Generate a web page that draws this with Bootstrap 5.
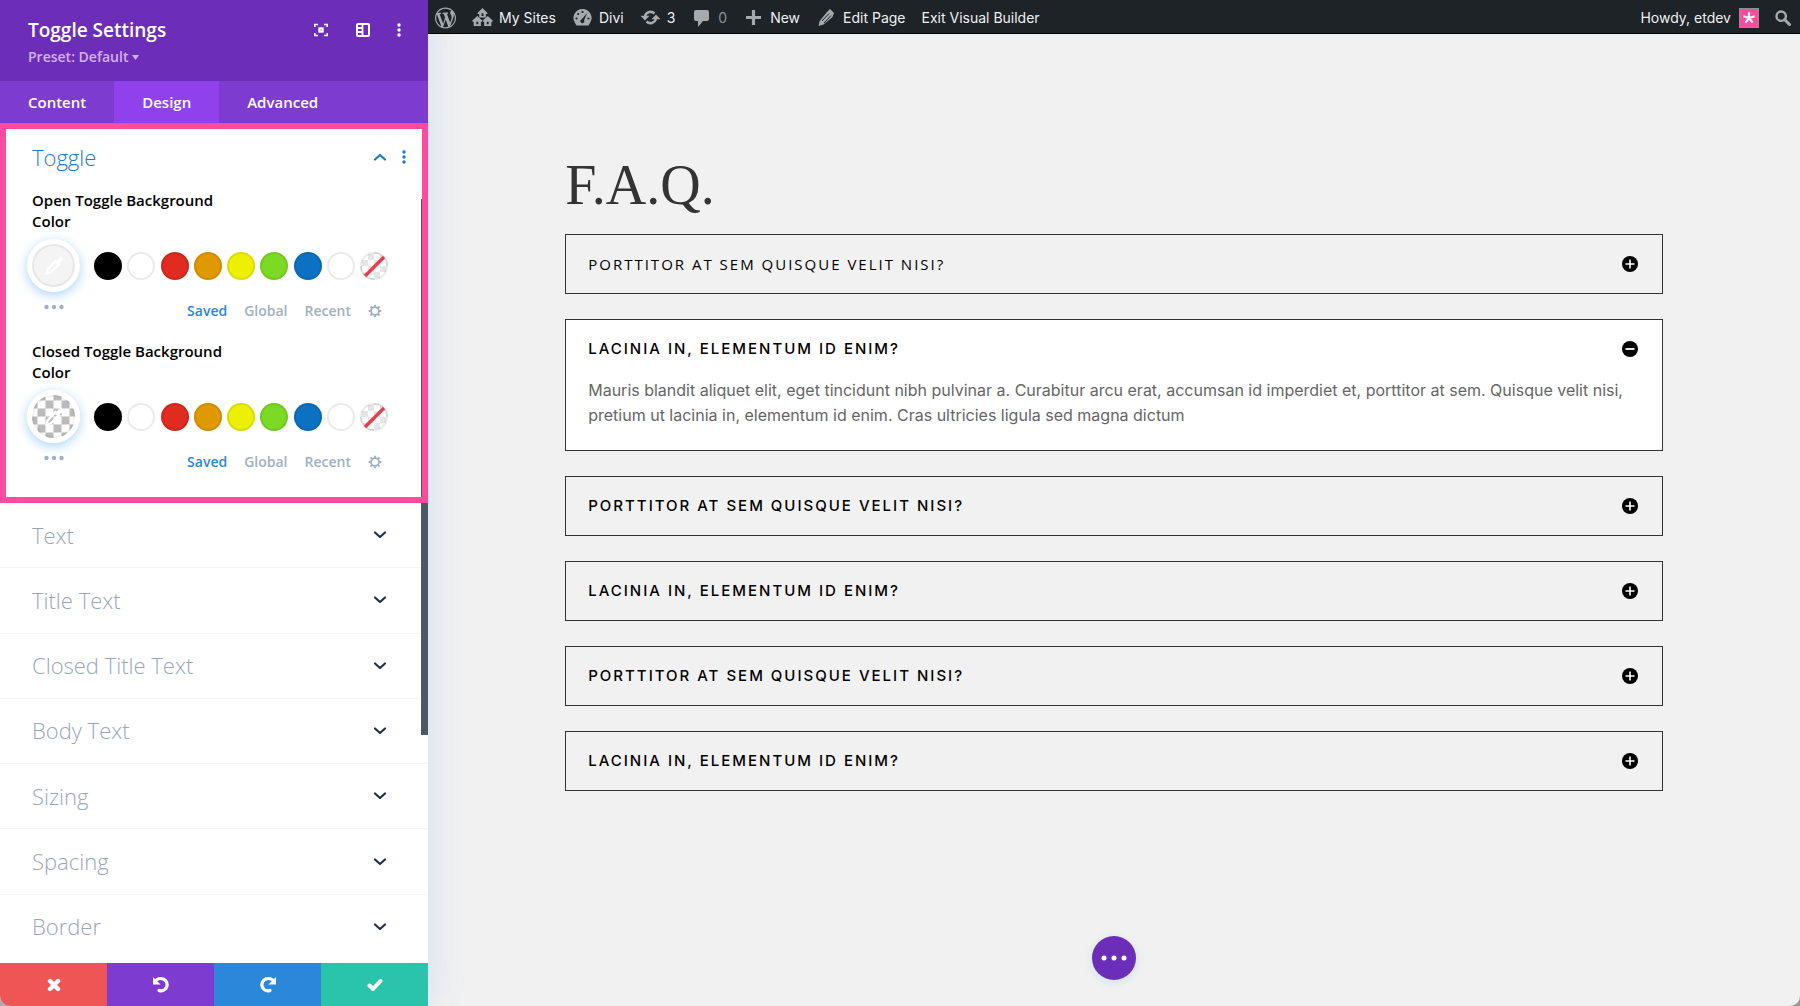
<!DOCTYPE html>
<html lang="en">
<head>
<meta charset="utf-8">
<meta name="viewport" content="width=device-width, initial-scale=1">
<title>Divi Visual Builder</title>
<link rel="stylesheet" href="https://cdn.jsdelivr.net/npm/bootstrap@5.3.0/dist/css/bootstrap.min.css">
<style>
  body { font-family: "Open Sans", sans-serif; background: #9a9a9a; color: #000; }
  button { font-family: inherit; font-weight: inherit; }
  a { text-decoration: none; color: inherit; }
  svg { display: block; flex: none; }
  .bare { border: 0; background: none; padding: 0; color: inherit; }

  /* settings panel */
  .panel { width: 428px; background: #fff; box-shadow: 0 0 40px #cfdeed; z-index: 2; border-bottom-left-radius: 10px; }
  .panel-top { background: #6c2eb9; color: #fff; padding: 16px 27px 12px 28px; }
  .panel-top h1 { font-size: 19px; line-height: 28px; font-weight: 600; }
  .panel-tools { height: 28px; gap: 27px; }
  .preset { font-size: 14px; line-height: 24px; font-weight: 600; color: #d5b0f7; gap: 4px; padding-top: 1px; }
  .tabs { background: #7e3bd0; color: #fff; font-size: 15px; font-weight: 600; line-height: 42px; }
  .tabs button { padding: 0 28px; }
  .tabs .active { background: #8f42ec; }
  .focus-frame { border: 6px solid #ff4a9e; height: 380px; padding: 12px 16px 0 26px; z-index: 1; }
  .group-title { font-size: 22px; line-height: 32px; font-weight: 300; }
  .group-head { margin-bottom: 17px; }
  .head-tools { gap: 15px; }
  .flip { transform: rotate(180deg); }
  .mirror { transform: scaleX(-1); }
  .blue { color: #2b87da; }
  .group-head.blue { color: #1a79d0; }
  .field-label { font-size: 15px; line-height: 21px; font-weight: 600; width: 200px; }
  .field { height: 151px; padding-right: 18px; }
  .picker { width: 53px; height: 53px; margin-left: -5px; border: 5px solid #fff; border-radius: 50%; background: #f4f4f4; color: #fff; box-shadow: 0 3px 12px #a9d4f3, inset 0 0 0 2px rgba(0,0,0,.05); }
  .checks { background: repeating-conic-gradient(#bbb 0 25%, #fff 0 50%) 50% / 16px 16px; }
  .picker-row { gap: 14px; margin-top: 7px; }
  .dot { width: 28px; height: 28px; border-radius: 50%; border: 2px solid rgba(0,0,0,.08); padding: 0; background-origin: border-box; }
  .c-black { background: #000; } .c-white { background: #fff; } .c-red { background: #e02b20; }
  .c-orange { background: #e09900; } .c-yellow { background: #edf000; } .c-green { background: #7cda24; }
  .c-blue { background: #0c71c3; }
  .c-none { background: repeating-conic-gradient(#e6e6e6 0 25%, #fff 0 50%) 50% / 12px 12px border-box; }
  .field-foot { padding: 0 6px 0 12px; margin-top: 7px; color: #a2b0c1; }
  .more-dots { padding-top: 5px; }
  .sources { font-size: 14px; line-height: 24px; font-weight: 600; gap: 17px; }
  .options { padding: 0 0 4px; }
  .option { color: #98a6b9; border-bottom: 1px solid #f3f5f8; padding: 0 41px 0 32px; font-size: 22px; font-weight: 300; }
  .option svg { color: #20304a; }
  .option:last-child { border-bottom: 0; }
  .thumb { right: 0; top: 199px; width: 7px; height: 536px; background: #4c5866; }
  .actions button { height: 43px; color: #fff; }
  .actions .a-discard { background: #ef5555; border-bottom-left-radius: 10px; }
  .actions .a-undo { background: #7e3bd0; }
  .actions .a-redo { background: #2b87da; }
  .actions .a-save { background: #29c4a9; }

  /* admin bar */
  .adminbar { height: 34px; background: #1d2327; border-bottom: 1px solid #000; color: #f0f0f1; font: 14px/31px Inter, sans-serif; padding: 2px 9px 0 7px; position: relative; z-index: 3; }
  .adminbar svg { color: #a7aaad; }
  .adminbar nav { gap: 16px; }
  .adminbar nav a { gap: 6px; }
  .adminbar nav svg { width: 21px; }
  .adminbar .muted-count { color: #8c9196; }
  .avatar { width: 20px; height: 20px; background: #ff4a9e; border: 1px solid #8c8f94; }
  .adminbar .avatar svg { color: #fff; }

  /* page */
  .site { background: #f1f1f1; border-bottom-right-radius: 10px; }
  .faq { width: 80%; padding-top: 116px; }
  .faq h2 { font: 400 56px/70px "Liberation Serif", serif; color: #333; margin: 0 0 14px; }
  .toggles { gap: 25px; }
  .toggle-box { border: 1px solid #333; padding: 17px 24px 17px 22px; }
  .toggle-box.open { background: #fff; padding-bottom: 22px; }
  .toggle-box h3 { font: 500 15px/24px Inter, sans-serif; letter-spacing: 2px; text-transform: uppercase; margin: 0; }
  .toggle-box h3.light { font: 400 15px/24px "Open Sans", sans-serif; letter-spacing: 2px; }
  .toggle-box p { font: 400 16px/25px Inter, sans-serif; color: #666; margin: 17px 0 0; }
  .fab { width: 44px; height: 44px; bottom: 26px; left: 50%; margin-left: -22px; border-radius: 50%; background: #6c2eb9; color: #fff; box-shadow: 0 2px 10px rgba(43,135,218,.15); }
</style>
</head>
<body>
<svg class="d-none">
  <symbol id="chev" viewBox="0 0 14 10"><path d="M2 2.500l5 4.500 5-4.500" fill="none" stroke="currentColor" stroke-width="2.200" stroke-linecap="round" stroke-linejoin="round"/></symbol>
  <symbol id="vdots" viewBox="0 0 4 14"><g fill="currentColor"><circle cx="2" cy="2" r="1.700"/><circle cx="2" cy="7" r="1.700"/><circle cx="2" cy="12" r="1.700"/></g></symbol>
  <symbol id="hdots" viewBox="0 0 20 6"><g fill="currentColor"><circle cx="2.500" cy="3" r="2.200"/><circle cx="10" cy="3" r="2.200"/><circle cx="17.500" cy="3" r="2.200"/></g></symbol>
  <symbol id="gear" viewBox="0 0 16 16"><g fill="none" stroke="currentColor"><circle cx="8" cy="8" r="4.500" stroke-width="2"/><path d="M8 .8v2.400M8 12.800v2.400M.8 8h2.400M12.800 8h2.400M2.900 2.900l1.700 1.700M11.400 11.400l1.700 1.700M2.900 13.100l1.700-1.700M11.400 4.600l1.700-1.700" stroke-width="2.200"/></g></symbol>
  <symbol id="dropper" viewBox="0 0 16 16"><path d="M2 14l1-3.500 6-6 2.500 2.500-6 6z" fill="none" stroke="currentColor" stroke-width="1.800"/><path d="M8 3.500l1-1 1.300 1 1.700-2.200a1.900 1.900 0 0 1 2.700 2.700L12.500 5.700l1 1.300-1 1z" fill="currentColor"/></symbol>
  <symbol id="slash" viewBox="0 0 24 24"><path d="M3 22L22 3" stroke="#f0384a" stroke-width="3.200"/></symbol>
  <symbol id="plus" viewBox="0 0 16 16"><circle cx="8" cy="8" r="8"/><path d="M8 3.500v9M3.500 8h9" stroke="#fff" stroke-width="1.600"/></symbol>
  <symbol id="minus" viewBox="0 0 16 16"><circle cx="8" cy="8" r="8"/><path d="M3.500 8h9" stroke="#fff" stroke-width="1.800"/></symbol>
  <symbol id="undo" viewBox="0 0 18 18"><path d="M3 5.500C5 2.600 8.500 1.900 11.300 3c3.300 1.400 4.700 5 3.300 8.200-1.400 3-4.600 4.300-7.600 3.200" fill="none" stroke="currentColor" stroke-width="3.200" stroke-linecap="round"/><path d="M1 1v7.500h7.500z" fill="currentColor"/></symbol>
</svg>

<div class="d-flex vh-100 overflow-hidden">
  <aside class="panel d-flex flex-column flex-shrink-0 position-relative">
    <header class="panel-top d-flex justify-content-between align-items-start">
      <div>
        <h1 class="m-0">Toggle Settings</h1>
        <button class="bare preset d-flex align-items-center" type="button">Preset: Default
          <svg width="7" height="5" viewBox="0 0 7 5"><path d="M0 0h7L3.500 5z" fill="currentColor"/></svg></button>
      </div>
      <div class="panel-tools d-flex align-items-center">
        <button class="bare" type="button" aria-label="Expand"><svg width="16" height="16" viewBox="0 0 16 16"><path d="M1.800 5V2.500H5M11 2.500h3.200V5M14.200 11v2.500H11M5 13.500H1.800V11" fill="none" stroke="currentColor" stroke-width="1.600"/><rect x="6.400" y="6.400" width="3.200" height="3.200" fill="none" stroke="currentColor" stroke-width="2.200"/></svg></button>
        <button class="bare" type="button" aria-label="Dock"><svg width="14" height="14" viewBox="0 0 14 14"><rect x="1" y="1" width="12" height="12" rx="1" fill="none" stroke="currentColor" stroke-width="2"/><path d="M6.500 1v12M1 5h5M1 9h5" stroke="currentColor" stroke-width="1.800"/></svg></button>
        <button class="bare" type="button" aria-label="More"><svg width="4" height="14"><use href="#vdots"/></svg></button>
      </div>
    </header>
    <nav class="tabs d-flex">
      <button class="bare" type="button">Content</button>
      <button class="bare active" type="button">Design</button>
      <button class="bare" type="button">Advanced</button>
    </nav>

    <section class="focus-frame position-relative">
      <div class="group-head d-flex align-items-center justify-content-between blue">
        <h2 class="group-title m-0">Toggle</h2>
        <div class="head-tools d-flex align-items-center">
          <button class="bare" type="button" aria-label="Collapse"><svg class="flip" width="14" height="10"><use href="#chev"/></svg></button>
          <button class="bare" type="button" aria-label="Toggle options"><svg width="4" height="14"><use href="#vdots"/></svg></button>
        </div>
      </div>
      <div class="field">
        <div class="field-label">Open Toggle Background Color</div>
        <div class="picker-row d-flex align-items-center">
          <button class="picker d-flex align-items-center justify-content-center p-0" type="button" aria-label="Pick open colour"><svg width="20" height="20"><use href="#dropper"/></svg></button>
          <div class="d-flex justify-content-between flex-fill">
            <button class="dot c-black" type="button" aria-label="Black"></button><button class="dot c-white" type="button" aria-label="White"></button><button class="dot c-red" type="button" aria-label="Red"></button><button class="dot c-orange" type="button" aria-label="Orange"></button><button class="dot c-yellow" type="button" aria-label="Yellow"></button><button class="dot c-green" type="button" aria-label="Green"></button><button class="dot c-blue" type="button" aria-label="Blue"></button><button class="dot c-white" type="button" aria-label="White"></button><button class="dot c-none" type="button" aria-label="None"><svg width="24" height="24"><use href="#slash"/></svg></button>
          </div>
        </div>
        <div class="field-foot d-flex justify-content-between">
          <button class="bare more-dots align-self-start" type="button" aria-label="More colours"><svg width="20" height="6"><use href="#hdots"/></svg></button>
          <div class="sources d-flex align-items-center">
            <button class="bare blue" type="button">Saved</button><button class="bare" type="button">Global</button><button class="bare" type="button">Recent</button><button class="bare" type="button" aria-label="Palette settings"><svg width="14" height="14"><use href="#gear"/></svg></button>
          </div>
        </div>
      </div>
      <div class="field">
        <div class="field-label">Closed Toggle Background Color</div>
        <div class="picker-row d-flex align-items-center">
          <button class="picker checks d-flex align-items-center justify-content-center p-0" type="button" aria-label="Pick closed colour"><svg width="20" height="20"><use href="#dropper"/></svg></button>
          <div class="d-flex justify-content-between flex-fill">
            <button class="dot c-black" type="button" aria-label="Black"></button><button class="dot c-white" type="button" aria-label="White"></button><button class="dot c-red" type="button" aria-label="Red"></button><button class="dot c-orange" type="button" aria-label="Orange"></button><button class="dot c-yellow" type="button" aria-label="Yellow"></button><button class="dot c-green" type="button" aria-label="Green"></button><button class="dot c-blue" type="button" aria-label="Blue"></button><button class="dot c-white" type="button" aria-label="White"></button><button class="dot c-none" type="button" aria-label="None"><svg width="24" height="24"><use href="#slash"/></svg></button>
          </div>
        </div>
        <div class="field-foot d-flex justify-content-between">
          <button class="bare more-dots align-self-start" type="button" aria-label="More colours"><svg width="20" height="6"><use href="#hdots"/></svg></button>
          <div class="sources d-flex align-items-center">
            <button class="bare blue" type="button">Saved</button><button class="bare" type="button">Global</button><button class="bare" type="button">Recent</button><button class="bare" type="button" aria-label="Palette settings"><svg width="14" height="14"><use href="#gear"/></svg></button>
          </div>
        </div>
      </div>
    </section>

    <div class="options d-flex flex-column flex-fill">
      <a href="#" class="option d-flex flex-fill align-items-center justify-content-between">Text<svg width="14" height="10"><use href="#chev"/></svg></a>
      <a href="#" class="option d-flex flex-fill align-items-center justify-content-between">Title Text<svg width="14" height="10"><use href="#chev"/></svg></a>
      <a href="#" class="option d-flex flex-fill align-items-center justify-content-between">Closed Title Text<svg width="14" height="10"><use href="#chev"/></svg></a>
      <a href="#" class="option d-flex flex-fill align-items-center justify-content-between">Body Text<svg width="14" height="10"><use href="#chev"/></svg></a>
      <a href="#" class="option d-flex flex-fill align-items-center justify-content-between">Sizing<svg width="14" height="10"><use href="#chev"/></svg></a>
      <a href="#" class="option d-flex flex-fill align-items-center justify-content-between">Spacing<svg width="14" height="10"><use href="#chev"/></svg></a>
      <a href="#" class="option d-flex flex-fill align-items-center justify-content-between">Border<svg width="14" height="10"><use href="#chev"/></svg></a>
    </div>
    <div class="thumb position-absolute"></div>

    <footer class="actions d-flex">
      <button class="bare a-discard flex-fill w-25 d-flex align-items-center justify-content-center" type="button" aria-label="Discard"><svg width="14" height="14" viewBox="0 0 14 14"><path d="M3 3l8 8M11 3l-8 8" stroke="currentColor" stroke-width="4.400" stroke-linecap="round"/></svg></button>
      <button class="bare a-undo flex-fill w-25 d-flex align-items-center justify-content-center" type="button" aria-label="Undo"><svg width="18" height="18"><use href="#undo"/></svg></button>
      <button class="bare a-redo flex-fill w-25 d-flex align-items-center justify-content-center" type="button" aria-label="Redo"><svg class="mirror" width="18" height="18"><use href="#undo"/></svg></button>
      <button class="bare a-save flex-fill w-25 d-flex align-items-center justify-content-center" type="button" aria-label="Save"><svg width="16" height="14" viewBox="0 0 16 14"><path d="M2.500 7.500L6 11l7.500-8" fill="none" stroke="currentColor" stroke-width="4" stroke-linejoin="round" stroke-linecap="round"/></svg></button>
    </footer>
  </aside>

  <div class="site flex-fill d-flex flex-column position-relative">
    <header class="adminbar d-flex justify-content-between">
      <nav class="d-flex">
        <a href="#" class="d-flex align-items-center" aria-label="WordPress"><svg width="22" height="22" viewBox="0 0 20 20"><path fill="currentColor" d="M20 10c0-5.510-4.490-10-10-10C4.480 0 0 4.490 0 10c0 5.520 4.480 10 10 10 5.510 0 10-4.480 10-10zM7.780 15.370L4.370 6.220c.55-.02 1.170-.08 1.170-.08.5-.06.44-1.130-.06-1.110 0 0-1.450.11-2.370.11-.18 0-.37 0-.58-.01C4.120 2.690 6.870 1.110 10 1.110c2.330 0 4.450.87 6.050 2.340-.68-.11-1.650.39-1.650 1.580 0 .74.45 1.360.9 2.100.35.61.55 1.360.55 2.460 0 1.490-1.400 5-1.400 5l-3.030-8.370c.54-.02.82-.17.82-.17.5-.05.44-1.250-.06-1.220 0 0-1.440.12-2.380.12-.87 0-2.330-.12-2.330-.12-.5-.03-.56 1.200-.06 1.220l.92.08 1.260 3.410zM17.410 10c.24-.64.74-1.870.43-4.250.7 1.290 1.050 2.710 1.050 4.250 0 3.290-1.730 6.240-4.400 7.780.97-2.590 1.940-5.200 2.920-7.780zM6.100 18.090C3.120 16.650 1.110 13.530 1.110 10c0-1.300.23-2.480.72-3.590C3.250 10.300 4.670 14.200 6.100 18.090zm4.030-6.630l2.580 6.980c-.86.29-1.760.45-2.710.45-.79 0-1.570-.11-2.290-.33.81-2.380 1.620-4.740 2.420-7.100z"/></svg></a>
        <a href="#" class="d-flex align-items-center"><svg width="22" height="19" viewBox="0 0 22 20"><path fill="currentColor" d="M11 0l5.500 5.500-1.200 1.200-.8-.7V10h-7V6l-.8.700L5.500 5.500zM10 5.500v2.800h2V5.500zM5.500 8.500l5.500 5-1 1.200-.7-.6V19H1.700v-4.900l-.7.600-1-1.200zm-1 6v2.500h2v-2.500zM16.500 8.500l5.500 5-1 1.200-.7-.6V19h-7.600v-4.900l-.7.600-1-1.200zm-1 6v2.500h2v-2.500z"/></svg>My Sites</a>
        <a href="#" class="d-flex align-items-center"><svg width="18" height="17" viewBox="0 0 18 17"><path fill="currentColor" d="M9 0a9 9 0 0 1 7.500 14l-1.500 2.500H3L1.500 14A9 9 0 0 1 9 0z"/><g fill="#1d2327"><circle cx="9" cy="3" r="1.100"/><circle cx="4.700" cy="5" r="1.100"/><circle cx="3" cy="9.500" r="1.100"/><circle cx="15" cy="9.500" r="1.100"/><path d="M13.800 3.800l-3.200 7.400a2 2 0 1 1-2.300-1z"/></g></svg>Divi</a>
        <a href="#" class="d-flex align-items-center"><svg width="19" height="17" viewBox="0 0 20 17"><g fill="none" stroke="currentColor" stroke-width="2.600"><path d="M4.600 7A5.700 5.700 0 0 1 14 4.500M15.400 10A5.700 5.700 0 0 1 6 12.500"/></g><path d="M0 6.800h9L4.500 11.500zM11 10.200h9L15.500 5.500z" fill="currentColor"/></svg>3</a>
        <a href="#" class="muted-count d-flex align-items-center"><svg width="15" height="18" viewBox="0 0 15 18"><path fill="currentColor" d="M2 1h11a2 2 0 0 1 2 2v7a2 2 0 0 1-2 2H9l-5 6v-6H2a2 2 0 0 1-2-2V3a2 2 0 0 1 2-2z"/></svg>0</a>
        <a href="#" class="d-flex align-items-center"><svg width="15" height="15" viewBox="0 0 15 15"><path d="M7.500 0v15M0 7.500h15" stroke="currentColor" stroke-width="3.200"/></svg>New</a>
        <a href="#" class="d-flex align-items-center"><svg width="16" height="17" viewBox="0 0 16 17"><path fill="currentColor" d="M11.500 0l4 4-1.500 4L5 15.500 0 17l1.200-5L8.500 3z"/><path d="M3.500 12l7-7.500M5.500 14l7-7.500" stroke="#1d2327" stroke-width="1"/></svg>Edit Page</a>
        <a href="#" class="d-flex align-items-center">Exit Visual Builder</a>
      </nav>
      <div class="d-flex align-items-center gap-3">
        <a href="#" class="d-flex align-items-center gap-2">Howdy, etdev
          <span class="avatar d-flex align-items-center justify-content-center"><svg width="14" height="14" viewBox="0 0 12 12"><path d="M6 6V1M6 6l4.800-1.600M6 6l3 4M6 6l-3 4M6 6L1.200 4.400" stroke="currentColor" stroke-width="1.800"/></svg></span></a>
        <button class="bare" type="button" aria-label="Search"><svg width="16" height="16" viewBox="0 0 16 16"><circle cx="6.200" cy="6.200" r="4.700" fill="none" stroke="currentColor" stroke-width="2.400"/><path d="M9.500 9.500l5 5" stroke="currentColor" stroke-width="3" stroke-linecap="round"/></svg></button>
      </div>
    </header>

    <main class="faq mx-auto">
      <h2>F.A.Q.</h2>
      <div class="toggles d-flex flex-column">
        <div class="toggle-box d-flex justify-content-between align-items-center"><h3 class="light">Porttitor at sem quisque velit nisi?</h3><button class="bare" type="button" aria-label="Open"><svg width="16" height="16"><use href="#plus"/></svg></button></div>
        <div class="toggle-box open">
          <div class="d-flex justify-content-between align-items-center"><h3>Lacinia in, elementum id enim?</h3><button class="bare" type="button" aria-label="Close"><svg width="16" height="16"><use href="#minus"/></svg></button></div>
          <p>Mauris blandit aliquet elit, eget tincidunt nibh pulvinar a. Curabitur arcu erat, accumsan id imperdiet et, porttitor at sem. Quisque velit nisi, pretium ut lacinia in, elementum id enim. Cras ultricies ligula sed magna dictum</p>
        </div>
        <div class="toggle-box d-flex justify-content-between align-items-center"><h3>Porttitor at sem quisque velit nisi?</h3><button class="bare" type="button" aria-label="Open"><svg width="16" height="16"><use href="#plus"/></svg></button></div>
        <div class="toggle-box d-flex justify-content-between align-items-center"><h3>Lacinia in, elementum id enim?</h3><button class="bare" type="button" aria-label="Open"><svg width="16" height="16"><use href="#plus"/></svg></button></div>
        <div class="toggle-box d-flex justify-content-between align-items-center"><h3>Porttitor at sem quisque velit nisi?</h3><button class="bare" type="button" aria-label="Open"><svg width="16" height="16"><use href="#plus"/></svg></button></div>
        <div class="toggle-box d-flex justify-content-between align-items-center"><h3>Lacinia in, elementum id enim?</h3><button class="bare" type="button" aria-label="Open"><svg width="16" height="16"><use href="#plus"/></svg></button></div>
      </div>
    </main>
    <button class="bare fab position-absolute d-flex align-items-center justify-content-center" type="button" aria-label="Builder menu"><svg width="26" height="6" viewBox="0 0 26 6"><g fill="#fff"><circle cx="3" cy="3" r="2.500"/><circle cx="13" cy="3" r="2.500"/><circle cx="23" cy="3" r="2.500"/></g></svg></button>
  </div>
</div>
<script src="https://cdn.jsdelivr.net/npm/bootstrap@5.3.0/dist/js/bootstrap.bundle.min.js"></script>
</body>
</html>
